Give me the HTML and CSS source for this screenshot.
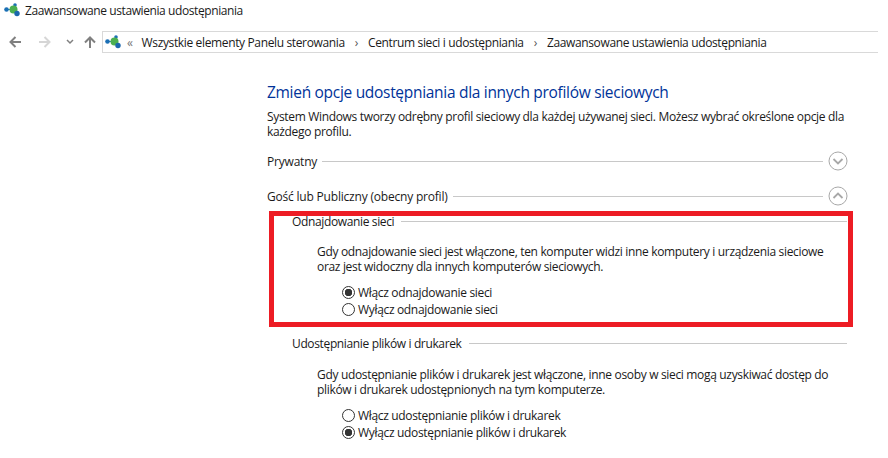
FILE: index.html
```html
<!DOCTYPE html>
<html lang="pl">
<head>
  <meta charset="UTF-8">
  <title>Zaawansowane ustawienia udostępniania</title>
  <link rel="stylesheet" href="styles.css">
</head>
<body>
  <div class="titlebar">
    <svg class="net-icon" width="16" height="14" viewBox="0 0 16 14"><path d="M2.500 6.500H9.500L11 2M9.500 6.500L13 10" stroke="#2a7fba" fill="none"/><circle cx="2.500" cy="6.500" r="2.300" fill="#1b6fb5"/><circle cx="11" cy="2" r="1.800" fill="#1b6fb5"/><circle cx="9.500" cy="6.500" r="4" fill="#4caf50"/><circle cx="13" cy="10.500" r="2.700" fill="#1b66ad"/></svg>
    <span>Zaawansowane ustawienia udostępniania</span>
  </div>

  <div class="navbar">
    <svg class="nav-btn" width="14" height="14" viewBox="0 0 14 14"><path d="M13 7H2.500M7.500 2L2.500 7l5 5" fill="none" stroke="#808080" stroke-width="2"/></svg>
    <svg class="nav-btn next" width="14" height="14" viewBox="0 0 14 14"><path d="M1 7h10.500M6.500 2l5 5-5 5" fill="none" stroke="#d6d6d6" stroke-width="2"/></svg>
    <svg class="nav-btn drop" width="8" height="6" viewBox="0 0 8 6"><path d="M1 1l3 3 3-3" fill="none" stroke="#808080" stroke-width="1.500"/></svg>
    <svg class="nav-btn up" width="14" height="14" viewBox="0 0 14 14"><path d="M7 13V2.500M2 7.500l5-5 5 5" fill="none" stroke="#808080" stroke-width="2"/></svg>
    <div class="address">
      <svg width="16" height="14" viewBox="0 0 16 14"><path d="M2.500 6.500H9.500L11 2M9.500 6.500L13 10" stroke="#2a7fba" fill="none"/><circle cx="2.500" cy="6.500" r="2.300" fill="#1b6fb5"/><circle cx="11" cy="2" r="1.800" fill="#1b6fb5"/><circle cx="9.500" cy="6.500" r="4" fill="#4caf50"/><circle cx="13" cy="10.500" r="2.700" fill="#1b66ad"/></svg>
      <span class="chev">«</span>
      <span>Wszystkie elementy Panelu sterowania</span>
      <span class="sep">›</span>
      <span>Centrum sieci i udostępniania</span>
      <span class="sep">›</span>
      <span>Zaawansowane ustawienia udostępniania</span>
    </div>
  </div>

  <div class="content">
    <h1>Zmień opcje udostępniania dla innych profilów sieciowych</h1>
    <p class="intro">System Windows tworzy odrębny profil sieciowy dla każdej używanej sieci. Możesz wybrać określone opcje dla każdego profilu.</p>

    <div class="profile">
      <span>Prywatny</span>
      <div class="line"></div>
      <svg class="toggle" width="20" height="20" viewBox="0 0 20 20"><circle cx="10" cy="10" r="9" fill="none" stroke="#a8a8a8"/><path d="M5.500 8l4.500 4.500L14.500 8" fill="none" stroke="#a8a8a8" stroke-width="1.800"/></svg>
    </div>
    <div class="profile">
      <span>Gość lub Publiczny (obecny profil)</span>
      <div class="line"></div>
      <svg class="toggle" width="20" height="20" viewBox="0 0 20 20"><circle cx="10" cy="10" r="9" fill="none" stroke="#a8a8a8"/><path d="M5.500 12l4.500-4.500L14.500 12" fill="none" stroke="#a8a8a8" stroke-width="1.800"/></svg>
    </div>

    <section class="group first">
      <div class="group-head"><span>Odnajdowanie sieci</span><div class="line"></div></div>
      <p>Gdy odnajdowanie sieci jest włączone, ten komputer widzi inne komputery i urządzenia sieciowe oraz jest widoczny dla innych komputerów sieciowych.</p>
      <div class="option"><span class="radio on"></span>Włącz odnajdowanie sieci</div>
      <div class="option"><span class="radio"></span>Wyłącz odnajdowanie sieci</div>
    </section>

    <section class="group">
      <div class="group-head"><span>Udostępnianie plików i drukarek</span><div class="line"></div></div>
      <p>Gdy udostępnianie plików i drukarek jest włączone, inne osoby w sieci mogą uzyskiwać dostęp do plików i drukarek udostępnionych na tym komputerze.</p>
      <div class="option"><span class="radio"></span>Włącz udostępnianie plików i drukarek</div>
      <div class="option"><span class="radio on"></span>Wyłącz udostępnianie plików i drukarek</div>
    </section>
  </div>

  <div class="highlight"></div>
</body>
</html>
```

FILE: styles.css
```css
html, body {
  height: 458px;
  overflow: hidden;
}
body {
  margin: 0;
  background-color: #fff;
  color: #1a1a1a;
  font-family: "Open Sans", sans-serif;
  font-size: 12px;
  letter-spacing: -0.33px;
  position: relative;
}
.titlebar {
  display: flex;
  align-items: center;
  gap: 5px;
  height: 20px;
  padding-left: 4px;
  letter-spacing: -0.41px;
}
.navbar {
  display: flex;
  align-items: center;
  height: 22px;
  margin-top: 11px;
  padding-left: 8px;
}
.nav-btn.next { margin-left: 16px; }
.nav-btn.drop { margin-left: 14px; }
.nav-btn.up { margin-left: 9px; }
.address {
  display: flex;
  align-items: center;
  box-sizing: border-box;
  width: 776px;
  height: 22px;
  margin-left: 5px;
  padding-left: 2px;
  border: 1px solid #d9d9d9;
  border-right: none;
  gap: 5px;
  letter-spacing: -0.36px;
}
.chev { color: #777; margin: 0 4px 0 1px; }
.sep { color: #555; margin: 0 5px; }
.content {
  width: 580px;
  margin-left: 267px;
  padding-top: 29px;
}
h1 {
  margin: 0;
  font-size: 15.5px;
  font-weight: 400;
  line-height: 20px;
  color: #003399;
  letter-spacing: -0.3px;
}
.intro {
  margin: 7px 0 0;
  line-height: 15px;
}
.profile {
  display: flex;
  align-items: center;
  height: 20px;
  margin-top: 12px;
  width: 581px;
  letter-spacing: -0.2px;
}
.profile + .profile { margin-top: 15px; }
.line {
  flex: 1;
  height: 1px;
  background-color: #c8c8c8;
  margin-left: 5px;
}
.toggle { margin-left: 5px; }
.group { padding-left: 25px; }
.group.first { margin-top: 7px; }
.group { margin-top: 17px; }
.group-head {
  display: flex;
  align-items: center;
  height: 16px;
  letter-spacing: -0.36px;
}
.group-head .line { margin-left: 7px; }
.group p {
  margin: 15px 0 0 25px;
  line-height: 15px;
  width: 515px;
}
.group + .group p { margin-top: 16px; }
.option {
  display: flex;
  align-items: center;
  height: 17px;
  margin-left: 50px;
  gap: 3px;
}
.group p + .option { margin-top: 10px; }
.radio {
  box-sizing: border-box;
  width: 13px;
  height: 13px;
  border: 1px solid #333;
  border-radius: 50%;
  background-color: #fff;
}
.radio.on {
  background: radial-gradient(circle, #333 0 3.5px, #fff 4px);
}
.highlight {
  position: absolute;
  left: 269px;
  top: 211px;
  width: 574px;
  height: 106px;
  border: 5px solid #ed1c24;
}
```
